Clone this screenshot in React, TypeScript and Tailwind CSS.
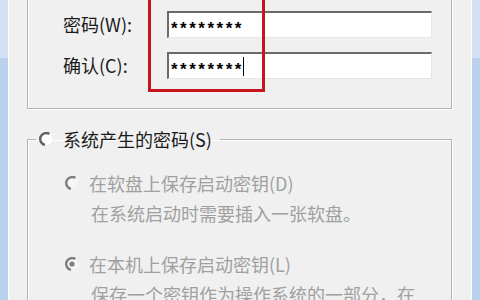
import React from 'react';

const Radio: React.FC<{ disabled?: boolean; checked?: boolean }> = ({ disabled, checked }) => {
  const dark = disabled ? '#7e7e7e' : '#606060';
  return (
    <svg width="14" height="14" viewBox="0 0 14 14" className="shrink-0">
      <circle cx="7" cy="7" r="6" fill={disabled ? '#f6f6f6' : '#ffffff'} />
      <path d="M 10.3 1.9 A 6 6 0 1 0 5.9 12.9" stroke={dark} strokeWidth="2.4" fill="none" />
      {checked && <circle cx="7" cy="7" r="2.6" fill={dark} />}
    </svg>
  );
};

const PasswordField: React.FC<{ caret?: boolean }> = ({ caret }) => (
  <div className="h-[27px] w-[265px] bg-white border-t-2 border-l-2 border-t-[#6a6a6a] border-l-[#6a6a6a] border-r border-b border-r-[#e6e6e6] border-b-[#e6e6e6] flex items-center pl-[2px]">
    <span className="font-['Liberation_Sans',sans-serif] font-bold text-[17px] tracking-[2.5px] text-black translate-y-[4px]">
      ********
    </span>
    {caret && <span className="w-px h-[19px] bg-black -ml-[1px]" />}
  </div>
);

export default function App() {
  return (
    <div className="w-[480px] h-[300px] overflow-hidden flex bg-[#f0f0f0] text-[18px] font-['Noto_Sans_CJK_SC','Liberation_Sans',sans-serif]">
      {/* left window frame */}
      <div className="w-[8px] flex flex-col">
        <div className="h-[58px] bg-[#d2e2f4]" />
        <div className="flex-1 bg-[#b9d1ec]" />
      </div>
      <div className="w-px bg-[#fbfbfb]" />

      <div className="flex-1 flex flex-col pl-[18px] pr-[19px]">
        {/* password group */}
        <div className="relative shrink-0 -mt-[10px] h-[119px] border border-[#b4b4b4] shadow-[inset_1px_1px_0_#ffffff,1px_1px_0_#ffffff] pt-[20px]">
          <div className="grid grid-cols-[104px_265px] gap-y-[14px] pl-[35px] items-center">
            <span className="text-[#1a1a1a] leading-[27px]">密码(W):</span>
            <PasswordField />
            <span className="text-[#1a1a1a] leading-[27px]">确认(C):</span>
            <PasswordField caret />
          </div>
          <div className="absolute left-[120px] top-0 w-[117px] h-[101px] border-[3px] border-[#c8141c]" />
        </div>

        {/* system generated password group */}
        <fieldset className="shrink-0 mt-[20px] border border-[#b4b4b4] shadow-[inset_1px_1px_0_#ffffff,1px_1px_0_#ffffff] pl-[37px] h-[200px]">
          <legend className="ml-[-29px] px-[3px] pr-[8px] flex items-center gap-[10px] h-[20px]">
            <Radio />
            <span className="text-[#1a1a1a] leading-[20px]">系统产生的密码(S)</span>
          </legend>

          <div className="pt-[19px] text-[#a0a0a0]">
            <div className="flex items-center gap-[10px] h-[30px]">
              <Radio disabled />
              <span className="leading-[30px]">在软盘上保存启动密钥(D)</span>
            </div>
            <div className="pl-[26px] h-[30px] leading-[30px]">在系统启动时需要插入一张软盘。</div>

            <div className="flex items-center gap-[10px] h-[30px] mt-[21px]">
              <Radio disabled checked />
              <span className="leading-[30px]">在本机上保存启动密钥(L)</span>
            </div>
            <div className="pl-[26px] h-[30px] leading-[30px]">保存一个密钥作为操作系统的一部分，在</div>
          </div>
        </fieldset>
      </div>

      {/* right window frame */}
      <div className="w-px bg-[#fbfbfb]" />
      <div className="w-[8px] flex flex-col">
        <div className="h-[58px] bg-[#d2e2f4]" />
        <div className="flex-1 bg-[#b9d1ec]" />
      </div>
    </div>
  );
}
